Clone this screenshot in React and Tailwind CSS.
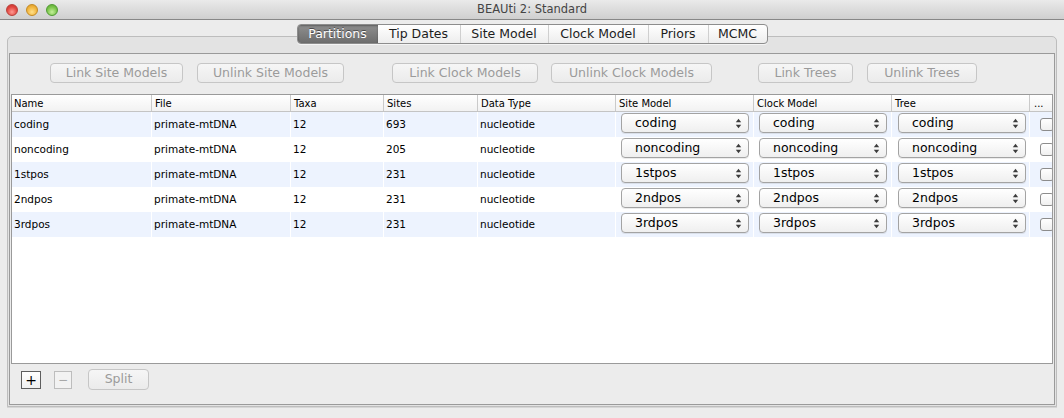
import React from "react";

const rows = [
  { name: "coding", sites: "693" },
  { name: "noncoding", sites: "205" },
  { name: "1stpos", sites: "231" },
  { name: "2ndpos", sites: "231" },
  { name: "3rdpos", sites: "231" },
];

function Arrows() {
  return (
    <svg width="7" height="11" viewBox="0 0 7 11" className="shrink-0">
      <path d="M0.8 4.3 L3.5 0.8 L6.2 4.3 Z" fill="#3c3c3c" />
      <path d="M0.8 6.7 L3.5 10.2 L6.2 6.7 Z" fill="#3c3c3c" />
    </svg>
  );
}

function Select({ value }) {
  return (
    <div className="w-[128px] h-[20px] rounded-[4px] border border-[#a3a3a3] bg-linear-to-b from-[#ffffff] to-[#efefef] shadow-[0_1px_0_rgba(0,0,0,0.08)] flex items-center justify-between pl-[13px] pr-[6px] text-[12.5px] text-black leading-none">
      <span>{value}</span>
      <Arrows />
    </div>
  );
}

function DisabledButton({ w, children }) {
  return (
    <div
      className={`${w} h-[20px] shrink-0 rounded-[4px] border border-[#c6c6c6] bg-linear-to-b from-[#f6f6f6] to-[#ebebeb] flex items-center justify-center text-[12.5px] text-[#9b9b9b] leading-none`}
    >
      {children}
    </div>
  );
}

function Tab({ w, label, selected, last }) {
  if (selected) {
    return (
      <div
        className={`${w} h-full flex items-center justify-center bg-linear-to-b from-[#8f8f8f] to-[#6d6d6d] text-white text-[12.5px] leading-none [text-shadow:0_-1px_0_rgba(0,0,0,0.45)] shadow-[inset_0_1px_2px_rgba(0,0,0,0.35)]`}
      >
        {label}
      </div>
    );
  }
  return (
    <div
      className={`${w} h-full flex items-center justify-center text-[12.5px] text-[#1c1c1c] leading-none ${last ? "" : "border-r border-[#cfcfcf]"}`}
    >
      {label}
    </div>
  );
}

export default function App() {
  return (
    <div className="w-[1064px] h-[418px] bg-[#ececec] overflow-hidden flex flex-col font-['DejaVu_Sans',sans-serif]">
      {/* Title bar */}
      <div className="h-[20px] shrink-0 flex items-center border-b border-[#878787] bg-linear-to-b from-[#eaeaea] to-[#cfcfcf]">
        <div className="w-[80px] flex items-center gap-[8px] pl-[6px]">
          <div className="w-[12px] h-[12px] rounded-full border border-[#b8403a] bg-[radial-gradient(circle_at_50%_70%,#ff9a92,#e0443d_60%,#c7332d)]" />
          <div className="w-[12px] h-[12px] rounded-full border border-[#c48a22] bg-[radial-gradient(circle_at_50%_70%,#ffe08a,#f0b33a_60%,#d8962a)]" />
          <div className="w-[12px] h-[12px] rounded-full border border-[#4f9a32] bg-[radial-gradient(circle_at_50%_70%,#c4f09a,#78c247_60%,#5aa634)]" />
        </div>
        <div className="flex-1 text-center text-[11.5px] text-[#444] leading-none">BEAUti 2: Standard</div>
        <div className="w-[80px]" />
      </div>

      {/* Tabs */}
      <div className="mt-[4px] h-[20px] shrink-0 flex justify-center relative z-10">
        <div className="h-[20px] flex rounded-[4px] border border-[#8d8d8d] overflow-hidden bg-linear-to-b from-[#ffffff] to-[#ededed] shadow-[0_1px_0_rgba(255,255,255,0.6)]">
          <Tab w="w-[80px]" label="Partitions" selected />
          <Tab w="w-[83px]" label="Tip Dates" />
          <Tab w="w-[88px]" label="Site Model" />
          <Tab w="w-[100px]" label="Clock Model" />
          <Tab w="w-[60px]" label="Priors" />
          <Tab w="w-[58px]" label="MCMC" last />
        </div>
      </div>

      {/* Panel */}
      <div className="-mt-[8px] mx-[7px] h-[371px] shrink-0 rounded-t-[5px] border border-[#bdbdbd] bg-[#e3e3e3] shadow-[0_1px_0_#d6d6d6] pt-[16px] px-[1px] pb-[1px] flex flex-col">
        <div className="flex-1 border border-[#9a9a9a] bg-[#ececec] flex flex-col px-[1px]">
          {/* Buttons row */}
          <div className="mt-[9px] flex items-center pl-[39px]">
            <DisabledButton w="w-[133px]">Link Site Models</DisabledButton>
            <div className="w-[14px]" />
            <DisabledButton w="w-[147px]">Unlink Site Models</DisabledButton>
            <div className="w-[48px]" />
            <DisabledButton w="w-[146px]">Link Clock Models</DisabledButton>
            <div className="w-[13px]" />
            <DisabledButton w="w-[161px]">Unlink Clock Models</DisabledButton>
            <div className="w-[46px]" />
            <DisabledButton w="w-[95px]">Link Trees</DisabledButton>
            <div className="w-[14px]" />
            <DisabledButton w="w-[110px]">Unlink Trees</DisabledButton>
          </div>

          {/* Table */}
          <div className="mt-[11px] h-[270px] border border-[#9a9a9a] bg-white flex flex-col overflow-hidden">
            <div className="h-[17px] shrink-0 flex border-b border-[#c4c4c4] bg-linear-to-b from-[#ffffff] to-[#f2f2f2] text-[10px] text-black leading-none">
              <div className="w-[140px] shrink-0 pl-[2px] pt-[1px] flex items-center border-r border-[#cacaca]">Name</div>
              <div className="w-[139px] shrink-0 pl-[3px] pt-[1px] flex items-center border-r border-[#cacaca]">File</div>
              <div className="w-[93px] shrink-0 pl-[3px] pt-[1px] flex items-center border-r border-[#cacaca]">Taxa</div>
              <div className="w-[94px] shrink-0 pl-[3px] pt-[1px] flex items-center border-r border-[#cacaca]">Sites</div>
              <div className="w-[138px] shrink-0 pl-[3px] pt-[1px] flex items-center border-r border-[#cacaca]">Data Type</div>
              <div className="w-[138px] shrink-0 pl-[3px] pt-[1px] flex items-center border-r border-[#cacaca]">Site Model</div>
              <div className="w-[138px] shrink-0 pl-[3px] pt-[1px] flex items-center border-r border-[#cacaca]">Clock Model</div>
              <div className="w-[138px] shrink-0 pl-[3px] pt-[1px] flex items-center border-r border-[#cacaca]">Tree</div>
              <div className="w-[22px] shrink-0 pl-[4px] pt-[1px] flex items-center">...</div>
            </div>
            {rows.map((r, i) => (
              <div
                key={r.name}
                className={`h-[25px] shrink-0 flex text-[10.5px] text-black leading-none ${i % 2 === 0 ? "bg-[#edf3fe]" : "bg-white"}`}
              >
                <div className="w-[140px] shrink-0 pl-[2px] flex items-center border-r border-white">{r.name}</div>
                <div className="w-[139px] shrink-0 pl-[2px] flex items-center border-r border-white">primate-mtDNA</div>
                <div className="w-[93px] shrink-0 pl-[2px] flex items-center border-r border-white">12</div>
                <div className="w-[94px] shrink-0 pl-[2px] flex items-center border-r border-white">{r.sites}</div>
                <div className="w-[138px] shrink-0 pl-[2px] flex items-center border-r border-white">nucleotide</div>
                <div className="w-[138px] shrink-0 pl-[5px] pt-[1px] border-r border-white">
                  <Select value={r.name} />
                </div>
                <div className="w-[138px] shrink-0 pl-[5px] pt-[1px] border-r border-white">
                  <Select value={r.name} />
                </div>
                <div className="w-[138px] shrink-0 pl-[6px] pt-[1px] border-r border-white">
                  <Select value={r.name} />
                </div>
                <div className="w-[22px] shrink-0 pl-[10px] pt-[6px]">
                  <div className="w-[14px] h-[13px] rounded-[3px] border border-[#8c8c8c] bg-linear-to-b from-[#ffffff] to-[#f0f0f0]" />
                </div>
              </div>
            ))}
            <div className="flex-1 bg-white" />
          </div>

          {/* Bottom buttons */}
          <div className="mt-[5px] h-[21px] flex items-center pl-[10px]">
            <div className="w-[20px] h-[18px] border border-[#5e5e5e] bg-linear-to-b from-[#ffffff] to-[#f0f0f0] flex items-center justify-center text-[14px] text-black leading-none">+</div>
            <div className="w-[13px]" />
            <div className="w-[18px] h-[18px] border border-[#bdbdbd] bg-[#f2f2f2] flex items-center justify-center text-[12px] text-[#a8a8a8] leading-none">−</div>
            <div className="w-[16px]" />
            <div className="w-[61px] h-[21px] rounded-[4px] border border-[#c6c6c6] bg-linear-to-b from-[#f6f6f6] to-[#ebebeb] flex items-center justify-center text-[12.5px] text-[#9b9b9b] leading-none">Split</div>
          </div>
        </div>
      </div>
    </div>
  );
}
